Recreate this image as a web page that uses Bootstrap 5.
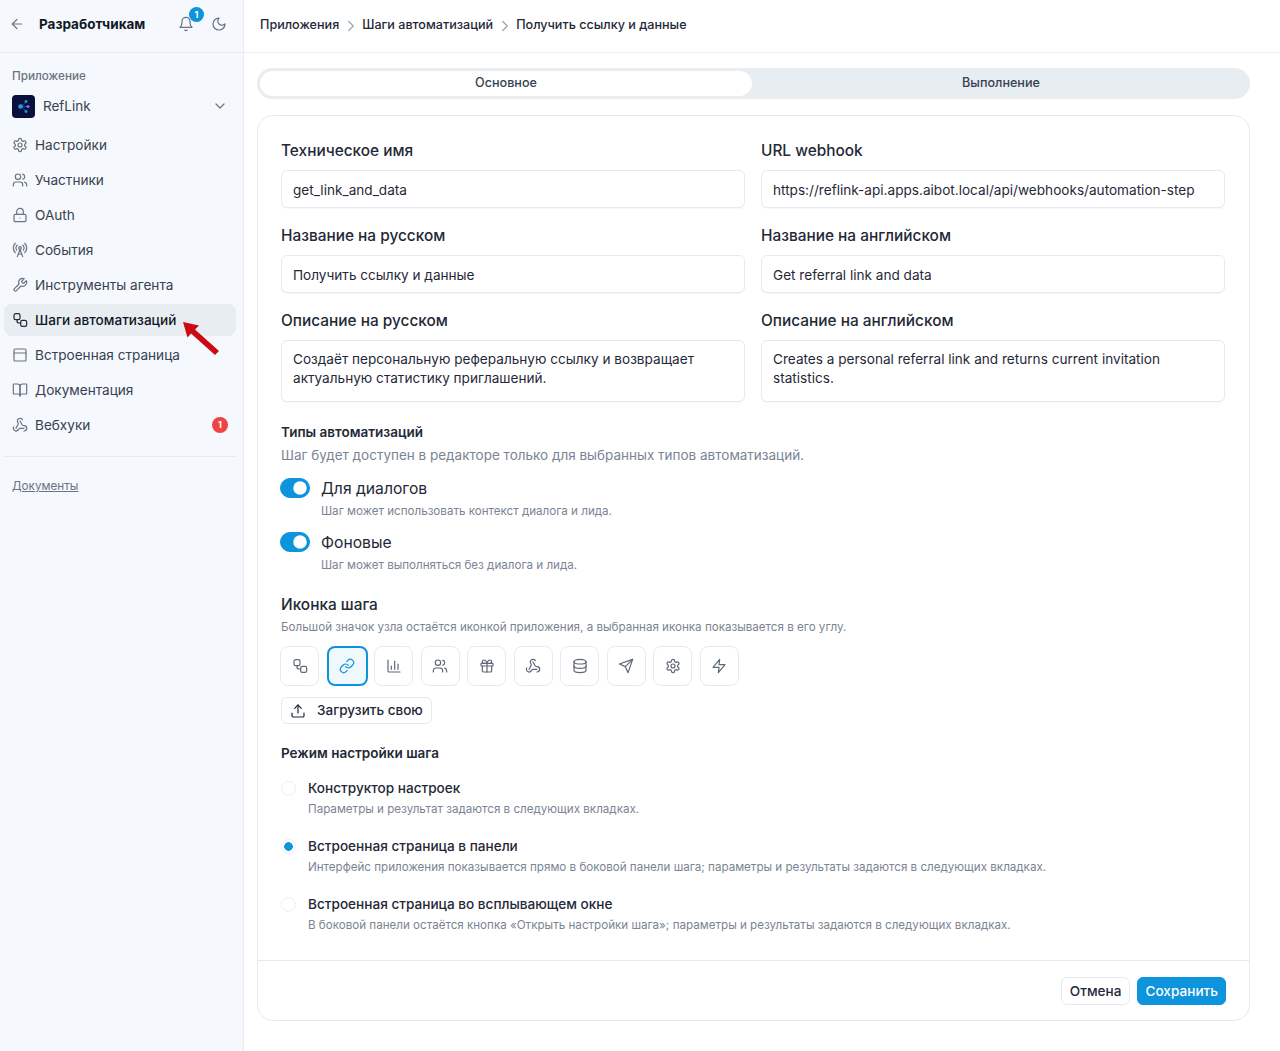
<!DOCTYPE html>
<html lang="ru">
<head>
    <meta charset="UTF-8">
    <title>Шаги автоматизаций</title>
    <link href="https://cdn.jsdelivr.net/npm/bootstrap@5.3.3/dist/css/bootstrap.min.css" rel="stylesheet">
    <style>
        body { font-family: Inter, "Liberation Sans", sans-serif; font-size: 13.6px; color: #1f2937; background: #fff; }
        .ico { width: 16px; height: 16px; fill: none; stroke: currentColor; stroke-width: 1.8; stroke-linecap: round; stroke-linejoin: round; flex: none; }

        .app-shell { min-height: 1051px; }
        .side { width: 244px; flex: none; background: #f5f8fc; border-right: 1px solid #e8edf2; position: relative; }
        .side-head { height: 53px; border-bottom: 1px solid #e8edf2; padding: 0 16px 4px 9px; }
        .side-title { font-size: 13.5px; font-weight: 700; color: #111827; margin-left: 14px; }
        .head-btn { color: #6b7280; }
        .bell-wrap { position: relative; margin-right: 17px; height: 16px; }
        .bell-count { position: absolute; top: -9px; left: 11px; width: 15px; height: 15px; border-radius: 50%; background: #0d94dc; color: #fff; font-size: 9px; font-weight: 700; line-height: 15px; text-align: center; }
        .side-label { font-size: 11.7px; font-weight: 500; color: #6b7280; padding: 16px 12px 0; line-height: 15px; }
        .app-pick { margin-top: 6px; padding: 0 15px 0 12px; height: 32px; font-size: 13.5px; color: #374151; }
        .app-logo { width: 23px; height: 23px; border-radius: 4px; background: #0a0f3c; margin-right: 8px; flex: none; }
        .app-chevron { margin-left: auto; color: #6b7280; }
        .side-nav { padding: 7px 7px 0 4px; gap: 3px; }
        .side-link { height: 32px; padding: 0 8px; border-radius: 8px; color: #374151; font-size: 13.6px; gap: 7px; }
        .side-link .ico { color: #6b7280; }
        .side-link.is-active { background: #e8edf2; color: #111827; font-weight: 500; }
        .side-link.is-active .ico { color: #1f2937; }
        .side-alert { margin-left: auto; width: 16px; height: 16px; border-radius: 50%; background: #ef4444; color: #fff; font-size: 9px; font-weight: 700; line-height: 16px; text-align: center; }
        .side-rule { margin: 15px 7px 0 4px; border-top: 1px solid #e5e9ef; opacity: 1; }
        .side-docs { display: inline-block; margin: 21px 0 0 12px; font-size: 11.7px; color: #6b7280; }
        .arrow-mark { position: absolute; left: 178px; top: 316px; width: 46px; height: 42px; }

        .top-bar { height: 53px; border-bottom: 1px solid #eef1f5; padding: 0 16px 1px; font-size: 12.6px; font-weight: 500; color: #1f2937; }
        .crumb-sep { width: 18px; height: 18px; color: #9ca3af; margin: 0 2.5px; stroke-width: 1.6; }
        .page-body { padding: 15px 30px 0 13px; }
        .tab-strip { height: 31px; background: #e8edf2; border-radius: 16px; padding: 3px; gap: 3px; }
        .tab-item { flex: 1 1 0; height: 25px; border-radius: 13px; font-size: 12.6px; font-weight: 500; color: #374151; line-height: 24px; text-align: center; padding: 0; }
        .tab-item.is-on { background: #fff; }
        .form-shell { margin-top: 16px; height: 906px; border: 1px solid #e6eaef; border-radius: 16px; --bs-card-bg: #fff; }
        .form-pad { padding: 24px 24px 0 23px; }
        .field-grid { display: grid; grid-template-columns: 1fr 1fr; column-gap: 16px; }
        .field-name { display: block; font-size: 15.4px; font-weight: 500; color: #1f2937; line-height: 22px; margin-bottom: 8px; }
        .field-box { height: 38px; padding: 1px 11px 0; font-size: 13.6px; color: #1f2937; border: 1px solid #e6eaef; border-radius: 6px; margin-bottom: 17px; box-shadow: 0 1px 1px rgba(16,24,40,.03); }
        textarea.field-box { height: 62px; padding: 8.5px 11px; line-height: 19px; resize: none; margin-bottom: 0; overflow: hidden; }
        .sect-title { font-size: 13.5px; font-weight: 600; color: #1f2937; line-height: 18px; }
        .sect-types { margin-top: 21px; }
        .sect-note { font-size: 13.5px; color: #7b8494; line-height: 18px; margin-top: 5px; }
        .toggle-row { gap: 11px; margin-top: 15px; }
        .toggle-row + .toggle-row { margin-top: 14px; }
        .toggle-row .form-check-input { width: 30px; height: 20px; margin: -1px 0 0 -1px; flex: none; background-color: #0d94dc; border-color: #0d94dc; }
        .toggle-name { font-size: 15.7px; color: #1f2937; line-height: 20px; }
        .fine-print { font-size: 11.62px; color: #7b8494; line-height: 16px; }
        .toggle-row .fine-print { margin-top: 4px; }
        .icon-title { font-size: 15.4px; font-weight: 500; line-height: 20px; margin-top: 22px; }
        .icon-hint { margin-top: 4px; }
        .icon-row { gap: 7.5px; margin: 11px 0 0 -1px; }
        .pick-btn { width: 39px; height: 40px; padding: 0; border: 1px solid #e6eaef; border-radius: 8px; background: #fff; color: #5f6877; }
        .pick-btn.is-on { width: 41px; margin-right: -1px; border: 2px solid #0d94dc; background: #eff8fd; color: #0d94dc; }
        .upload-btn { margin-top: 11px; height: 27px; width: 151px; padding: 0 8px; gap: 11px; border: 1px solid #e6eaef; border-radius: 6px; background: #fff; color: #1f2937; font-size: 13.5px; font-weight: 500; white-space: nowrap; }
        .mode-title { margin-top: 20px; }
        .mode-row { gap: 12px; margin-top: 17px; }
        .mode-row + .mode-row { margin-top: 20px; }
        .mode-row .form-check-input { width: 15px; height: 15px; margin: 2px 0 0; flex: none; border-color: #eceff3; }
        .mode-row .form-check-input:checked { background-color: #fff; background-image: radial-gradient(circle, #0d94dc 0 4px, #fff 4.6px); border-color: #eceff3; }
        .mode-name { font-size: 13.6px; font-weight: 500; color: #1f2937; line-height: 18px; }
        .mode-row .fine-print { margin-top: 4px; }
        .form-foot { border-top: 1px solid #e6eaef; padding: 16px 23px 0; gap: 7px; position: absolute; left: 0; right: 0; bottom: 0; height: 60px; }
        .foot-btn { height: 28px; padding: 0 8px; font-size: 13.6px; font-weight: 500; border-radius: 6px; line-height: 26px; }
        .foot-cancel { border: 1px solid #e6eaef; background: #fff; color: #1f2937; }
        .foot-save { border: 1px solid #0d94dc; background: #0d94dc; color: #fff; padding: 0 7px; }
    </style>
</head>
<body>
<svg width="0" height="0" class="position-absolute">
    <defs>
        <symbol id="i-gear" viewBox="0 0 24 24"><path d="M12.22 2h-.44a2 2 0 0 0-2 2v.18a2 2 0 0 1-1 1.73l-.43.25a2 2 0 0 1-2 0l-.15-.08a2 2 0 0 0-2.73.73l-.22.38a2 2 0 0 0 .73 2.73l.15.1a2 2 0 0 1 1 1.72v.51a2 2 0 0 1-1 1.74l-.15.09a2 2 0 0 0-.73 2.73l.22.38a2 2 0 0 0 2.73.73l.15-.08a2 2 0 0 1 2 0l.43.25a2 2 0 0 1 1 1.73V20a2 2 0 0 0 2 2h.44a2 2 0 0 0 2-2v-.18a2 2 0 0 1 1-1.73l.43-.25a2 2 0 0 1 2 0l.15.08a2 2 0 0 0 2.73-.73l.22-.39a2 2 0 0 0-.73-2.73l-.15-.08a2 2 0 0 1-1-1.74v-.5a2 2 0 0 1 1-1.74l.15-.09a2 2 0 0 0 .73-2.73l-.22-.38a2 2 0 0 0-2.73-.73l-.15.08a2 2 0 0 1-2 0l-.43-.25a2 2 0 0 1-1-1.73V4a2 2 0 0 0-2-2z"/><circle cx="12" cy="12" r="3"/></symbol>
        <symbol id="i-users" viewBox="0 0 24 24"><path d="M16 21v-2a4 4 0 0 0-4-4H6a4 4 0 0 0-4 4v2"/><circle cx="9" cy="7" r="4"/><path d="M22 21v-2a4 4 0 0 0-3-3.87"/><path d="M16 3.13a4 4 0 0 1 0 7.75"/></symbol>
        <symbol id="i-lock" viewBox="0 0 24 24"><rect x="3" y="11" width="18" height="11" rx="2"/><path d="M7 11V7a5 5 0 0 1 10 0v4"/><path d="M12 16.5h.01"/></symbol>
        <symbol id="i-radio" viewBox="0 0 24 24"><path d="M4.9 16.1C1 12.2 1 5.8 4.9 1.9"/><path d="M7.8 4.7a6.14 6.14 0 0 0-.8 7.5"/><circle cx="12" cy="9" r="2"/><path d="M16.2 4.8c2 2 2.26 5.11.8 7.47"/><path d="M19.1 1.9a9.96 9.96 0 0 1 0 14.1"/><path d="M9.5 18h5"/><path d="m8 22 4-11 4 11"/></symbol>
        <symbol id="i-wrench" viewBox="0 0 24 24"><path d="M14.7 6.3a1 1 0 0 0 0 1.4l1.6 1.6a1 1 0 0 0 1.4 0l3.77-3.77a6 6 0 0 1-7.94 7.94l-6.91 6.91a2.12 2.12 0 0 1-3-3l6.91-6.91a6 6 0 0 1 7.94-7.94l-3.76 3.76z"/></symbol>
        <symbol id="i-flow" viewBox="0 0 24 24"><rect x="3" y="2.5" width="9" height="9" rx="2.5"/><path d="M7.5 11.5v2a3 3 0 0 0 3 3h2.5"/><rect x="13" y="12.5" width="9" height="9" rx="2.5"/></symbol>
        <symbol id="i-panel" viewBox="0 0 24 24"><rect x="3" y="3" width="18" height="18" rx="2"/><path d="M3 9h18"/></symbol>
        <symbol id="i-book" viewBox="0 0 24 24"><path d="M2 3h6a4 4 0 0 1 4 4v14a3 3 0 0 0-3-3H2z"/><path d="M22 3h-6a4 4 0 0 0-4 4v14a3 3 0 0 1 3-3h7z"/></symbol>
        <symbol id="i-hook" viewBox="0 0 24 24"><path d="M18 16.98h-5.99c-1.1 0-1.95.94-2.48 1.9A4 4 0 0 1 2 17c.01-.7.2-1.4.57-2"/><path d="m6 17 3.13-5.78c.53-.97.1-2.18-.5-3.1a4 4 0 1 1 6.89-4.06"/><path d="m12 6 3.13 5.73C15.66 12.7 16.9 13 18 13a4 4 0 0 1 0 8"/></symbol>
        <symbol id="i-link" viewBox="0 0 24 24"><path d="M10 13a5 5 0 0 0 7.54.54l3-3a5 5 0 0 0-7.07-7.07l-1.72 1.71"/><path d="M14 11a5 5 0 0 0-7.54-.54l-3 3a5 5 0 0 0 7.07 7.07l1.71-1.71"/></symbol>
        <symbol id="i-chart" viewBox="0 0 24 24"><path d="M3 3v16a2 2 0 0 0 2 2h16"/><path d="M8 17v-5"/><path d="M13 17V5"/><path d="M18 17V9"/></symbol>
        <symbol id="i-gift" viewBox="0 0 24 24"><rect x="3" y="8" width="18" height="4" rx="1"/><path d="M12 8v13"/><path d="M19 12v7a2 2 0 0 1-2 2H7a2 2 0 0 1-2-2v-7"/><path d="M7.5 8a2.5 2.5 0 0 1 0-5A4.8 8 0 0 1 12 8a4.8 8 0 0 1 4.5-5 2.5 2.5 0 0 1 0 5"/></symbol>
        <symbol id="i-db" viewBox="0 0 24 24"><ellipse cx="12" cy="5.5" rx="9" ry="3.5"/><path d="M3 5.5v13a9 3.5 0 0 0 18 0v-13"/><path d="M3 12a9 3.5 0 0 0 18 0"/></symbol>
        <symbol id="i-send" viewBox="0 0 24 24"><path d="m22 2-7 20-4-9-9-4 20-7z"/><path d="M22 2 11 13"/></symbol>
        <symbol id="i-zap" viewBox="0 0 24 24"><path d="M13 2 3 14h9l-1 8 10-12h-9l1-8z"/></symbol>
        <symbol id="i-upload" viewBox="0 0 24 24"><path d="M21 15v4a2 2 0 0 1-2 2H5a2 2 0 0 1-2-2v-4"/><path d="m17 8-5-5-5 5"/><path d="M12 3v12"/></symbol>
        <symbol id="i-bell" viewBox="0 0 24 24"><path d="M6 8a6 6 0 0 1 12 0c0 7 3 9 3 9H3s3-2 3-9"/><path d="M10.3 21a1.94 1.94 0 0 0 3.4 0"/></symbol>
        <symbol id="i-moon" viewBox="0 0 24 24"><path d="M12 3a6 6 0 0 0 9 9 9 9 0 1 1-9-9Z"/></symbol>
        <symbol id="i-back" viewBox="0 0 24 24"><path d="m12 19-7-7 7-7"/><path d="M19 12H5"/></symbol>
        <symbol id="i-down" viewBox="0 0 24 24"><path d="m6 9 6 6 6-6"/></symbol>
        <symbol id="i-next" viewBox="0 0 24 24"><path d="m9 18 6-6-6-6"/></symbol>
    </defs>
</svg>

<div class="app-shell d-flex">
    <aside class="side">
        <div class="side-head d-flex align-items-center">
            <svg class="ico head-btn"><use href="#i-back"/></svg>
            <span class="side-title flex-grow-1">Разработчикам</span>
            <span class="bell-wrap head-btn">
                <svg class="ico d-block"><use href="#i-bell"/></svg>
                <span class="bell-count">1</span>
            </span>
            <svg class="ico head-btn"><use href="#i-moon"/></svg>
        </div>
        <div class="side-label">Приложение</div>
        <div class="app-pick d-flex align-items-center">
            <svg class="app-logo" viewBox="0 0 23 23">
                <path d="M9 11.5 14 7M9 11.5h7M9 11.5l5 4.5" stroke="#3b82d6" stroke-width=".8" opacity=".7"/>
                <circle cx="8.5" cy="11.5" r="2.3" fill="#1f9bea"/>
                <circle cx="14" cy="6.5" r="1.4" fill="#1f9bea"/>
                <circle cx="16" cy="11.5" r="1.6" fill="#8b5cf6"/>
                <circle cx="14" cy="16.5" r="1.4" fill="#1f9bea"/>
            </svg>
            <span>RefLink</span>
            <svg class="ico app-chevron"><use href="#i-down"/></svg>
        </div>
        <nav class="side-nav d-flex flex-column">
            <a class="side-link d-flex align-items-center text-decoration-none" href="#"><svg class="ico"><use href="#i-gear"/></svg>Настройки</a>
            <a class="side-link d-flex align-items-center text-decoration-none" href="#"><svg class="ico"><use href="#i-users"/></svg>Участники</a>
            <a class="side-link d-flex align-items-center text-decoration-none" href="#"><svg class="ico"><use href="#i-lock"/></svg>OAuth</a>
            <a class="side-link d-flex align-items-center text-decoration-none" href="#"><svg class="ico"><use href="#i-radio"/></svg>События</a>
            <a class="side-link d-flex align-items-center text-decoration-none" href="#"><svg class="ico"><use href="#i-wrench"/></svg>Инструменты агента</a>
            <a class="side-link is-active d-flex align-items-center text-decoration-none" href="#"><svg class="ico"><use href="#i-flow"/></svg>Шаги автоматизаций</a>
            <a class="side-link d-flex align-items-center text-decoration-none" href="#"><svg class="ico"><use href="#i-panel"/></svg>Встроенная страница</a>
            <a class="side-link d-flex align-items-center text-decoration-none" href="#"><svg class="ico"><use href="#i-book"/></svg>Документация</a>
            <a class="side-link d-flex align-items-center text-decoration-none" href="#"><svg class="ico"><use href="#i-hook"/></svg>Вебхуки<span class="side-alert">1</span></a>
        </nav>
        <div class="side-rule"></div>
        <a class="side-docs" href="#">Документы</a>
        <svg class="arrow-mark" viewBox="0 0 46 42">
            <path d="M5 6 21 9.5 17 13.5 41 35 37 39 13 17.5 9.5 21.5z" fill="#cc0a14"/>
        </svg>
    </aside>

    <main class="flex-grow-1">
        <div class="top-bar d-flex align-items-center">
            <span>Приложения</span>
            <svg class="ico crumb-sep"><use href="#i-next"/></svg>
            <span>Шаги автоматизаций</span>
            <svg class="ico crumb-sep"><use href="#i-next"/></svg>
            <span>Получить ссылку и данные</span>
        </div>
        <div class="page-body">
            <div class="tab-strip d-flex">
                <div class="tab-item is-on">Основное</div>
                <div class="tab-item">Выполнение</div>
            </div>
            <div class="card form-shell position-relative">
                <div class="form-pad">
                    <div class="field-grid">
                        <div>
                            <label class="field-name">Техническое имя</label>
                            <input class="form-control field-box" value="get_link_and_data">
                        </div>
                        <div>
                            <label class="field-name">URL webhook</label>
                            <input class="form-control field-box" value="https://reflink-api.apps.aibot.local/api/webhooks/automation-step">
                        </div>
                        <div>
                            <label class="field-name">Название на русском</label>
                            <input class="form-control field-box" value="Получить ссылку и данные">
                        </div>
                        <div>
                            <label class="field-name">Название на английском</label>
                            <input class="form-control field-box" value="Get referral link and data">
                        </div>
                        <div>
                            <label class="field-name">Описание на русском</label>
                            <textarea class="form-control field-box">Создаёт персональную реферальную ссылку и возвращает актуальную статистику приглашений.</textarea>
                        </div>
                        <div>
                            <label class="field-name">Описание на английском</label>
                            <textarea class="form-control field-box">Creates a personal referral link and returns current invitation statistics.</textarea>
                        </div>
                    </div>

                    <div class="sect-title sect-types">Типы автоматизаций</div>
                    <div class="sect-note">Шаг будет доступен в редакторе только для выбранных типов автоматизаций.</div>
                    <div class="form-switch toggle-row d-flex p-0">
                        <input class="form-check-input" type="checkbox" checked>
                        <div>
                            <div class="toggle-name">Для диалогов</div>
                            <div class="fine-print">Шаг может использовать контекст диалога и лида.</div>
                        </div>
                    </div>
                    <div class="form-switch toggle-row d-flex p-0">
                        <input class="form-check-input" type="checkbox" checked>
                        <div>
                            <div class="toggle-name">Фоновые</div>
                            <div class="fine-print">Шаг может выполняться без диалога и лида.</div>
                        </div>
                    </div>

                    <div class="icon-title">Иконка шага</div>
                    <div class="fine-print icon-hint">Большой значок узла остаётся иконкой приложения, а выбранная иконка показывается в его углу.</div>
                    <div class="icon-row d-flex">
                        <button class="btn pick-btn d-flex align-items-center justify-content-center"><svg class="ico"><use href="#i-flow"/></svg></button>
                        <button class="btn pick-btn is-on d-flex align-items-center justify-content-center"><svg class="ico"><use href="#i-link"/></svg></button>
                        <button class="btn pick-btn d-flex align-items-center justify-content-center"><svg class="ico"><use href="#i-chart"/></svg></button>
                        <button class="btn pick-btn d-flex align-items-center justify-content-center"><svg class="ico"><use href="#i-users"/></svg></button>
                        <button class="btn pick-btn d-flex align-items-center justify-content-center"><svg class="ico"><use href="#i-gift"/></svg></button>
                        <button class="btn pick-btn d-flex align-items-center justify-content-center"><svg class="ico"><use href="#i-hook"/></svg></button>
                        <button class="btn pick-btn d-flex align-items-center justify-content-center"><svg class="ico"><use href="#i-db"/></svg></button>
                        <button class="btn pick-btn d-flex align-items-center justify-content-center"><svg class="ico"><use href="#i-send"/></svg></button>
                        <button class="btn pick-btn d-flex align-items-center justify-content-center"><svg class="ico"><use href="#i-gear"/></svg></button>
                        <button class="btn pick-btn d-flex align-items-center justify-content-center"><svg class="ico"><use href="#i-zap"/></svg></button>
                    </div>
                    <button class="btn upload-btn d-flex align-items-center"><svg class="ico"><use href="#i-upload"/></svg>Загрузить свою</button>

                    <div class="sect-title mode-title">Режим настройки шага</div>
                    <div class="mode-row d-flex">
                        <input class="form-check-input" type="radio" name="mode">
                        <div>
                            <div class="mode-name">Конструктор настроек</div>
                            <div class="fine-print">Параметры и результат задаются в следующих вкладках.</div>
                        </div>
                    </div>
                    <div class="mode-row d-flex">
                        <input class="form-check-input" type="radio" name="mode" checked>
                        <div>
                            <div class="mode-name">Встроенная страница в панели</div>
                            <div class="fine-print">Интерфейс приложения показывается прямо в боковой панели шага; параметры и результаты задаются в следующих вкладках.</div>
                        </div>
                    </div>
                    <div class="mode-row d-flex">
                        <input class="form-check-input" type="radio" name="mode">
                        <div>
                            <div class="mode-name">Встроенная страница во всплывающем окне</div>
                            <div class="fine-print">В боковой панели остаётся кнопка «Открыть настройки шага»; параметры и результаты задаются в следующих вкладках.</div>
                        </div>
                    </div>
                </div>
                <div class="form-foot d-flex justify-content-end align-items-start">
                    <button class="btn foot-btn foot-cancel">Отмена</button>
                    <button class="btn foot-btn foot-save">Сохранить</button>
                </div>
            </div>
        </div>
    </main>
</div>
<script src="https://cdn.jsdelivr.net/npm/bootstrap@5.3.3/dist/js/bootstrap.bundle.min.js"></script>
</body>
</html>
